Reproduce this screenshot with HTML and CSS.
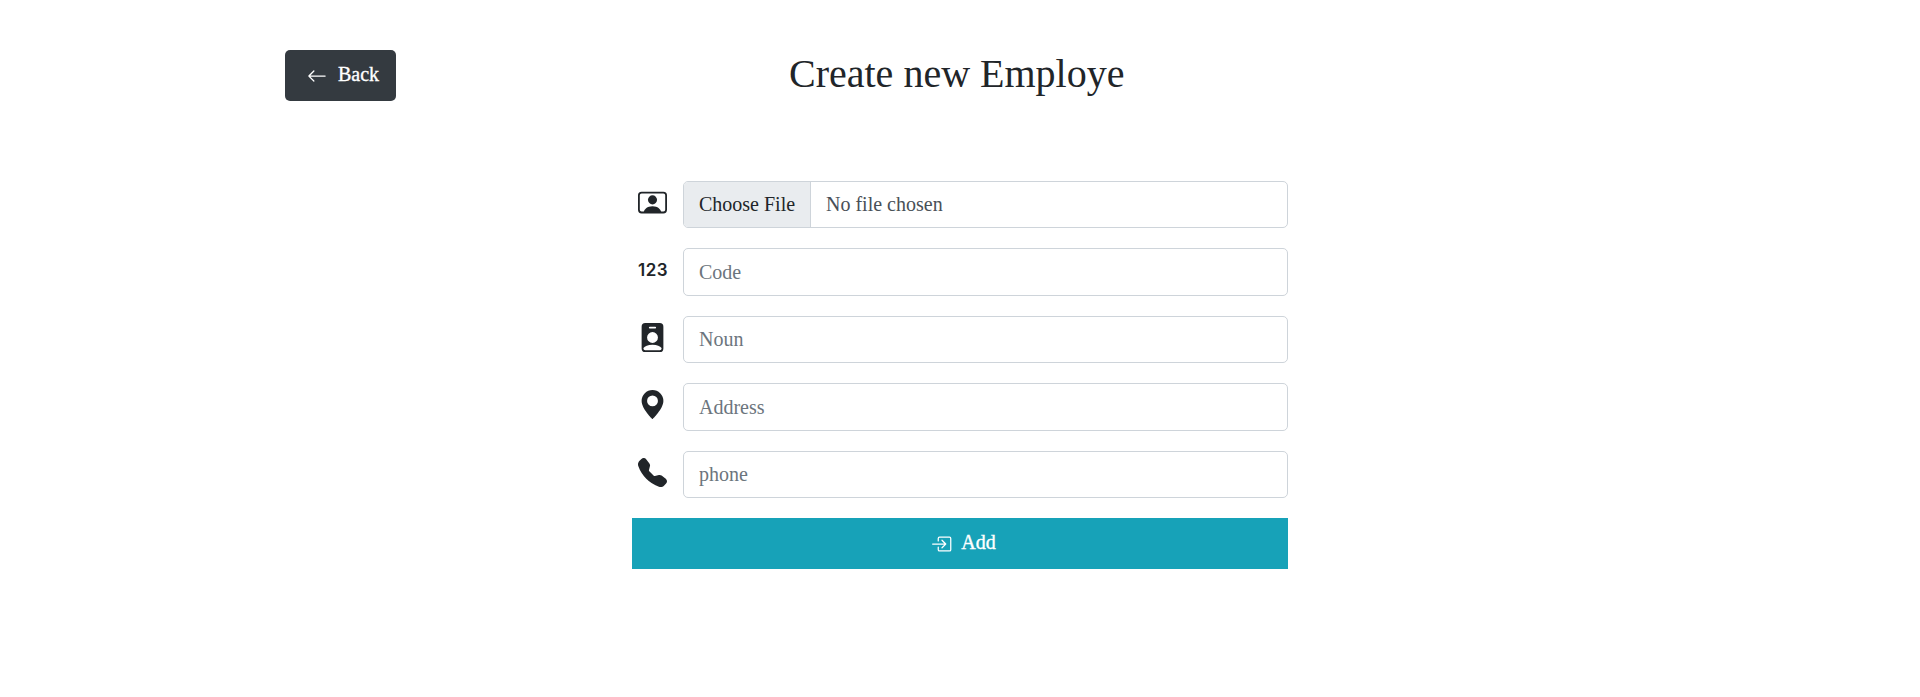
FILE: index.html
```html
<!DOCTYPE html>
<html lang="en">
<head>
<meta charset="utf-8">
<title>Create new Employe</title>
<link rel="stylesheet" href="styles.css">
</head>
<body>
<header class="header">
  <a class="back" href="#"><svg class="btn-icon" viewBox="0 0 16 16"><path fill-rule="evenodd" d="M15 8a.5.5 0 0 0-.5-.5H2.707l3.147-3.146a.5.5 0 1 0-.708-.708l-4 4a.5.5 0 0 0 0 .708l4 4a.5.5 0 0 0 .708-.708L2.707 8.5H14.5A.5.5 0 0 0 15 8z"/></svg><span>Back</span></a>
  <h1 class="title">Create new Employe</h1>
</header>
<form class="form">
  <div class="row">
    <svg class="icon" viewBox="0 0 16 16"><path d="M8 9.05a2.5 2.5 0 1 0 0-5 2.5 2.5 0 0 0 0 5z"/><path d="M2 2a2 2 0 0 0-2 2v8a2 2 0 0 0 2 2h12a2 2 0 0 0 2-2V4a2 2 0 0 0-2-2H2zm10.798 11c-.453-1.27-1.76-3-4.798-3-3.037 0-4.345 1.73-4.798 3H2a1 1 0 0 1-1-1V4a1 1 0 0 1 1-1h12a1 1 0 0 1 1 1v8a1 1 0 0 1-1 1h-1.202z"/></svg>
    <div class="control file"><span class="choose">Choose File</span><span class="filename">No file chosen</span></div>
  </div>
  <div class="row">
    <span class="icon digits">123</span>
    <input class="control" type="text" placeholder="Code">
  </div>
  <div class="row">
    <svg class="icon" viewBox="0 0 16 16"><path d="M2 2a2 2 0 0 1 2-2h8a2 2 0 0 1 2 2v12a2 2 0 0 1-2 2H4a2 2 0 0 1-2-2V2zm4.500 0a.5.5 0 0 0 0 1h3a.5.5 0 0 0 0-1h-3zM8 11a3 3 0 1 0 0-6 3 3 0 0 0 0 6zm5 2.755C12.146 12.825 10.623 12 8 12s-4.146.826-5 1.755V14a1 1 0 0 0 1 1h8a1 1 0 0 0 1-1v-.245z"/></svg>
    <input class="control" type="text" placeholder="Noun">
  </div>
  <div class="row">
    <svg class="icon" viewBox="0 0 16 16"><path d="M8 16s6-5.686 6-10A6 6 0 0 0 2 6c0 4.314 6 10 6 10zm0-7a3 3 0 1 1 0-6 3 3 0 0 1 0 6z"/></svg>
    <input class="control" type="text" placeholder="Address">
  </div>
  <div class="row">
    <svg class="icon" viewBox="0 0 16 16"><path fill-rule="evenodd" d="M1.885.511a1.745 1.745 0 0 1 2.610.163L6.290 2.980c.329.423.445.974.315 1.494l-.547 2.190a.678.678 0 0 0 .178.643l2.457 2.457a.678.678 0 0 0 .644.178l2.189-.547a1.745 1.745 0 0 1 1.494.315l2.306 1.794c.829.645.905 1.870.163 2.611l-1.034 1.034c-.740.740-1.846 1.065-2.877.702a18.634 18.634 0 0 1-7.010-4.420 18.634 18.634 0 0 1-4.420-7.009c-.362-1.030-.037-2.137.703-2.877L1.885.511z"/></svg>
    <input class="control" type="text" placeholder="phone">
  </div>
  <button class="add" type="button"><svg class="btn-icon" viewBox="0 0 16 16"><path fill-rule="evenodd" d="M4.500 3.500A1.500 1.500 0 0 1 6 2h8a1.500 1.500 0 0 1 1.500 1.500v9A1.500 1.500 0 0 1 14 14H6a1.500 1.500 0 0 1-1.500-1.500v-2a.5.5 0 0 1 1 0v2a.5.5 0 0 0 .5.5h8a.5.5 0 0 0 .5-.5v-9a.5.5 0 0 0-.5-.5H6a.5.5 0 0 0-.5.5v2a.5.5 0 0 1-1 0v-2z"/><path fill-rule="evenodd" d="M11.354 8.354a.5.5 0 0 0 0-.708l-3-3a.5.5 0 1 0-.708.708L9.793 7.500H.5a.5.5 0 0 0 0 1h9.293l-2.147 2.146a.5.5 0 0 0 .708.708l3-3z"/></svg><span>Add</span></button>
</form>
</body>
</html>
```
FILE: styles.css
```css
* { box-sizing: border-box; }
body {
  margin: 0;
  padding-top: 50px;
  background: #fff;
  color: #212529;
  font: 20px/30px "Liberation Serif", "Times New Roman", serif;
}
svg { display: block; fill: currentColor; }
.header {
  display: grid;
  grid-template-columns: 504px 334px;
  margin-left: 285px;
  height: 130.8px;
  align-items: start;
}
.back {
  display: flex;
  align-items: center;
  width: 111px;
  height: 51px;
  padding-left: 22px;
  gap: 11px;
  border-radius: 5px;
  background: #343a40;
  color: #fff;
  text-decoration: none;
}
.back span, .add span {
  padding-bottom: 3px;
  -webkit-text-stroke: 0.35px currentColor;
}
.btn-icon { width: 20px; height: 20px; }
.title {
  margin: 0;
  font-size: 40px;
  font-weight: 400;
  line-height: 48px;
  white-space: nowrap;
}
.form {
  display: flex;
  flex-direction: column;
  gap: 20px;
  width: 656px;
  margin-left: 632px;
}
.row {
  display: flex;
  height: 47.5px;
  padding-left: 6px;
}
.icon {
  flex: none;
  width: 29px;
  height: 29px;
  margin: 7px 16px 0 0;
}
.digits {
  font: 600 17px/30px Inter, sans-serif;
  letter-spacing: 0.5px;
  text-align: center;
  white-space: nowrap;
}
.control {
  flex: 1;
  min-width: 0;
  height: 47.5px;
  padding: 0 15px;
  border: 1px solid #ced4da;
  border-radius: 5px;
  background: #fff;
  color: #495057;
  font: inherit;
}
.control::placeholder { color: #6c757d; opacity: 1; }
.file {
  display: flex;
  padding: 0;
  overflow: hidden;
  line-height: 45px;
}
.choose {
  width: 127px;
  padding-left: 15px;
  border-right: 1px solid #ced4da;
  background: #e9ecef;
  color: #212529;
}
.filename { padding-left: 15px; }
.add {
  display: flex;
  align-items: center;
  justify-content: center;
  gap: 9px;
  height: 51px;
  padding: 0 0 0 8px;
  border: 0;
  background: #17a2b8;
  color: #fff;
  font: inherit;
}
```
